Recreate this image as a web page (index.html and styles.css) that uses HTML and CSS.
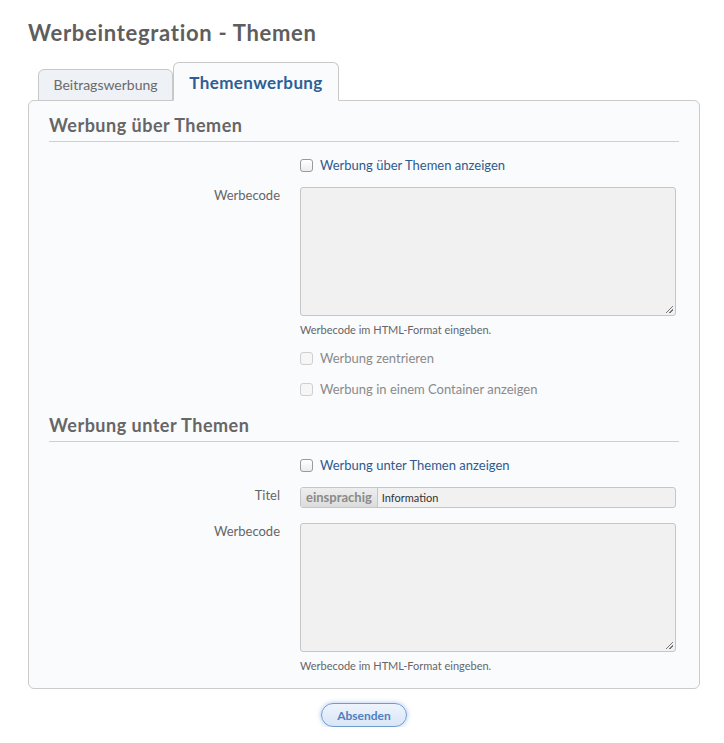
FILE: index.html
```html
<!DOCTYPE html>
<html lang="de">
<head>
<meta charset="utf-8">
<title>Werbeintegration - Themen</title>
<link rel="stylesheet" href="styles.css">
</head>
<body>
<div class="page">
  <h1 class="title">Werbeintegration - Themen</h1>
  <div class="tabs">
    <div class="tab">Beitragswerbung</div>
    <div class="tab active">Themenwerbung</div>
  </div>
  <div class="panel">
    <section class="group">
      <h2 class="group-title">Werbung über Themen</h2>
      <div class="row row-check">
        <div class="label"></div>
        <label class="check"><span class="box"></span><span>Werbung über Themen anzeigen</span></label>
      </div>
      <div class="row">
        <div class="label">Werbecode</div>
        <div class="field">
          <div class="textarea"><span class="grip"></span></div>
          <p class="hint">Werbecode im HTML-Format eingeben.</p>
          <label class="check disabled"><span class="box"></span><span>Werbung zentrieren</span></label>
          <label class="check disabled"><span class="box"></span><span>Werbung in einem Container anzeigen</span></label>
        </div>
      </div>
    </section>
    <section class="group group-2">
      <h2 class="group-title">Werbung unter Themen</h2>
      <div class="row row-check">
        <div class="label"></div>
        <label class="check"><span class="box"></span><span>Werbung unter Themen anzeigen</span></label>
      </div>
      <div class="row row-title">
        <div class="label">Titel</div>
        <div class="field">
          <div class="input"><span class="lang">einsprachig</span><span class="value">Information</span></div>
        </div>
      </div>
      <div class="row">
        <div class="label">Werbecode</div>
        <div class="field">
          <div class="textarea"><span class="grip"></span></div>
          <p class="hint">Werbecode im HTML-Format eingeben.</p>
        </div>
      </div>
    </section>
  </div>
  <div class="actions"><button class="submit">Absenden</button></div>
</div>
</body>
</html>
```
FILE: styles.css
```css
html, body {
  margin: 0;
  padding: 0;
  background: #fff;
}
body {
  font-family: "Lato", "Open Sans", sans-serif;
  color: #666;
}
.page {
  width: 672px;
  margin-left: 28px;
  padding-top: 20px;
}
.title {
  margin: 0;
  font-size: 22px;
  letter-spacing: 0.7px;
  font-weight: bold;
  color: #5e5e5e;
  line-height: 26px;
}
.tabs {
  display: flex;
  align-items: flex-end;
  margin: 16px 0 -1px 10px;
  position: relative;
  z-index: 1;
}
.tab {
  width: 135px;
  box-sizing: border-box;
  height: 32px;
  border: 1px solid #c8c8c8;
  border-radius: 6px 6px 0 0;
  background: #eef1f5;
  color: #6a6a6a;
  font-size: 14px;
  text-align: center;
  line-height: 30px;
}
.tab.active {
  width: 166px;
  height: 39px;
  background: #fafbfd;
  border-bottom-color: #fafbfd;
  color: #2e5f94;
  font-weight: bold;
  font-size: 17px;
  letter-spacing: 0.4px;
  line-height: 40px;
}
.panel {
  border: 1px solid #cbcbcb;
  border-radius: 6px;
  background: #fafbfd;
  padding: 13px 20px 16px 20px;
}
.group-title {
  margin: 0;
  font-size: 18px;
  letter-spacing: 0.5px;
  font-weight: bold;
  color: #666;
  line-height: 22px;
  padding-bottom: 5px;
  border-bottom: 1px solid #cfcfcf;
}
.group-2 {
  margin-top: 16px;
}
.row {
  display: flex;
  gap: 20px;
}
.label {
  width: 231px;
  flex: none;
  text-align: right;
  font-size: 13px;
  line-height: 16px;
  color: #666;
}
.field {
  width: 376px;
}
.row-check {
  margin-top: 14px;
  height: 18px;
  align-items: center;
}
.check {
  display: flex;
  align-items: center;
  gap: 7px;
  font-size: 13px;
  color: #2e5a8e;
  height: 18px;
}
.check .box {
  width: 11px;
  height: 11px;
  border: 1px solid #9a9a9a;
  border-radius: 3px;
  background: linear-gradient(#fff, #ececec);
}
.check.disabled {
  color: #8a8a8a;
  margin-top: 13px;
}
.check.disabled .box {
  border-color: #cfcfcf;
  background: #f6f6f6;
}
.row-check + .row {
  margin-top: 13px;
}
.textarea {
  position: relative;
  height: 127px;
  border: 1px solid #c6c6c6;
  border-radius: 3px;
  background: #f1f1f1;
}
.grip {
  position: absolute;
  right: 2px;
  bottom: 2px;
  width: 7px;
  height: 7px;
  background: linear-gradient(135deg, transparent 45%, #777 45%, #777 55%, transparent 55%, transparent 70%, #777 70%, #777 80%, transparent 80%);
}
.hint {
  margin: 7px 0 0;
  font-size: 11px;
  line-height: 13px;
  color: #666;
}
.row-check + .row-title {
  margin-top: 13px;
}
.row-title + .row {
  margin-top: 15px;
}
.input {
  display: flex;
  height: 19px;
  border: 1px solid #c6c6c6;
  border-radius: 3px;
  background: #f1f1f1;
  overflow: hidden;
}
.lang {
  padding: 0 5px;
  background: linear-gradient(#eee, #dcdcdc);
  border-right: 1px solid #c6c6c6;
  font-size: 13px;
  font-weight: bold;
  color: #8a8a8a;
  line-height: 19px;
}
.value {
  padding-left: 4px;
  font-size: 11px;
  line-height: 19px;
  color: #333;
}
.actions {
  display: flex;
  justify-content: center;
  padding-top: 14px;
}
.submit {
  width: 86px;
  height: 24px;
  border: 1px solid #6f9bd1;
  border-radius: 12px;
  background: linear-gradient(#eef4fc, #d9e6f6);
  box-shadow: 0 0 5px rgba(100, 150, 220, 0.55);
  color: #4f7fc2;
  font-family: "Lato", "Open Sans", sans-serif;
  font-weight: bold;
  font-size: 12px;
  padding: 0;
}
```
